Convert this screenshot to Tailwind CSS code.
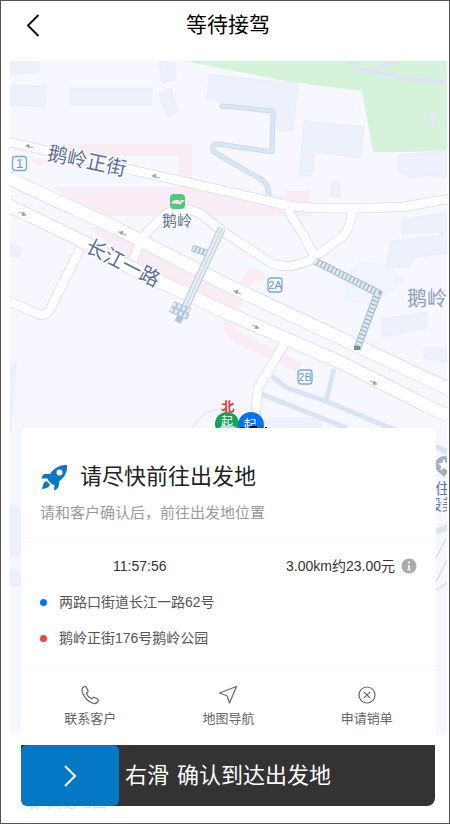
<!DOCTYPE html>
<html lang="zh-CN">
<head>
<meta charset="utf-8">
<meta name="viewport" content="width=device-width, initial-scale=1">
<title>等待接驾</title>
<script src="https://cdn.jsdelivr.net/npm/@tailwindcss/browser@4"></script>
</head>
<body class="min-h-screen bg-white font-['Liberation_Sans','Noto_Sans_CJK_SC',sans-serif] text-[#333]">
<div class="flex min-h-screen flex-col border border-[#555] pb-4">

  <header class="grid h-[60px] grid-cols-[64px_1fr_64px] items-center pb-3">
    <button type="button" aria-label="返回" class="flex h-10 items-center justify-center">
      <svg class="h-6 w-4" viewBox="0 0 16 24" fill="none" stroke="#111" stroke-width="2"><path d="M13.5 2 3 12.500 13.500 23"/></svg>
    </button>
    <h1 class="pl-1.5 text-center text-[21px] leading-8 text-black">等待接驾</h1>
  </header>

  <main class="flex flex-1 flex-col">
    <div class="ml-[9px] mr-[2px] grid">
      <svg class="col-start-1 row-start-1 h-[673px] w-full" viewBox="10 61 437 673" preserveAspectRatio="xMidYMin slice" role="img" aria-label="地图">
        <rect x="10" y="61" width="437" height="673" fill="#f7f7ff"/>
        <!-- park -->
        <path d="M185 61H447V150L410 152H373L362 91 290 82Z" fill="#d5f3da"/>
        <g fill="none" stroke="#dfe3f4" stroke-width="4"><path d="M350 61 355 67 370 71 410 79 447 83M370 71 397 60"/></g>
        <path d="M430 112h5v12l-3 3-2-3Z" fill="#e4e8f8"/>
        <!-- buildings -->
        <g fill="#edf1fc" stroke="#e6eaf5" stroke-width=".7">
          <path d="M10 61H39V72L10 75ZM10 85 46 86 45 107 10 105ZM70 88H152V105H70ZM159 62H174L176 80 162 83ZM159 94 171 88 178 111 168 118ZM209 74 298 84 293 131 278 131 275 110 226 104 207 99Z"/>
          <path d="M304 121 364 127 361 158 315 152 312 176 299 176ZM332 181H340V197H330ZM398 155 447 151V178L427 175 412 178 398 170ZM402 219 447 213V232L402 234Z"/>
          <path d="M391 241 436 236 447 230V253L413 258 409 268 386 267ZM382 319 427 312V328L382 337ZM424 348H447V363L424 358Z"/>
          <path d="M345 275 360 260 388 266 407 280 370 305 345 302Z" fill="#f0f4fd" stroke="none"/>
          <path d="M10 243 20 247 22 252 18 257 10 255ZM10 363H16L11 430H10ZM10 507H22V556H10ZM10 571H22V585H10ZM268 418H321V430H260Z"/>
        </g>
        <!-- station area -->
        <g fill="#f9ecf4">
          <path d="M50 144H192V183L225 191 285 196V191H310V216H90L53 187 178 187V156H95L75 150ZM28 157 50 160 38 166Z"/>
          <path d="M88 227H112L135 243 128 260ZM140 248 225 286 243 294 236 310 225 305 135 264Z"/>
        </g>
        <path d="M264 277 252 274 245 284 232 313Q224 330 240 339L300 368" fill="none" stroke="#f9ecf4" stroke-width="11"/>
        <!-- footpaths -->
        <g fill="none" stroke="#c9d6e8" stroke-width="5" stroke-linejoin="round" stroke-linecap="round">
          <path d="M222 106 273 111 272 152 218 144Q210 144 214 152L224 158 259 178Q269 183 269 196"/>
        </g>
        <g fill="none" stroke="#d9e6f6" stroke-width="3.500" stroke-linejoin="round" stroke-linecap="round">
          <path d="M222 106 273 111 272 152 218 144Q210 144 214 152L224 158 259 178Q269 183 269 196"/>
        </g>
        <g fill="none" stroke="#d9e3f4" stroke-width="5"><path d="M272 376 285 387 328 402 395 430M334 369 326 402M261 394 347 428"/></g>
        <!-- roads: casing, then surface -->
        <g fill="none" stroke="#d8dcea" stroke-linejoin="round">
          <path stroke-width="10" d="M80 249 52 305Q46 320 34 312L8 301M133 260 143 236 163 216Q185 202 205 217L225 233 268 261Q287 272 312 259L342 237Q352 226 352 209M287 209 304 236 315 257M286 341 258 388 254 430"/>
          <path stroke-width="10" d="M8 142 225 191 290 206Q320 210 402 207L449 199"/>
          <path stroke-width="14" d="M8 178 120 230 225 284 449 389M8 205 80 240 131 268 225 312 342 363 425 405 449 416"/>
        </g>
        <g fill="none" stroke="#fff" stroke-linejoin="round">
          <path stroke-width="8.500" d="M80 249 52 305Q46 320 34 312L8 301M133 260 143 236 163 216Q185 202 205 217L225 233 268 261Q287 272 312 259L342 237Q352 226 352 209M287 209 304 236 315 257M286 341 258 388 254 430"/>
          <path stroke-width="8.500" d="M8 142 225 191 290 206Q320 210 402 207L449 199"/>
          <path stroke-width="12.500" d="M8 178 120 230 225 284 449 389M8 205 80 240 131 268 225 312 342 363 425 405 449 416"/>
        </g>
        <!-- direction arrows -->
        <g stroke="#aaa" stroke-width="1" fill="#999">
          <path d="M26 146 33 147.500M26 145.500 29 144.500V148ZM152 176 160 178M152 175.500 156 174.500 155 178ZM119 232 126 235M119 232 123 231.500 122 235ZM19 212 26 215M26 215 22 215.500 23 212ZM234 291 241 294M234 291 238 290.500 237 294ZM252 325 259 328M259 328 255 328.500 256 325ZM370 381 377 384M377 384 373 384.500 374 381Z"/>
        </g>
        <!-- footbridge and stairs -->
        <path d="M222 228 185 308" stroke="#bccbd8" stroke-width="8"/>
        <path d="M222 228 185 308" stroke="#e4edf4" stroke-width="6"/>
        <path d="M222 228 185 308" stroke="#c6d4df" stroke-width="1"/>
        <g fill="none">
          <path d="M192 248 207 253" stroke="#b3c3d8" stroke-width="7"/><path d="M193 248 207 253" stroke="#e3ebf6" stroke-width="5" stroke-dasharray="2 2"/>
          <path d="M170 309 188 317M173 304 190 311M176 318 182 321" stroke="#b3c3d8" stroke-width="6"/><path d="M170 309 188 317M173 304 190 311" stroke="#e3ebf6" stroke-width="4" stroke-dasharray="3 2"/>
          <path d="M315 261 378 293 357 349" stroke="#a9bccb" stroke-width="7.500"/>
          <path d="M315 261 378 293 357 349" stroke="#e0ecf3" stroke-width="5.500" stroke-dasharray="2.500 1.500"/>
        </g>
        <path d="M354 346h6v4h-6Z" fill="#7d8c90"/>
        <!-- exits -->
        <g fill="#f6faff" stroke="#78a9e2" stroke-width="1.300">
          <rect x="12.500" y="156.500" width="14" height="14" rx="3"/><rect x="268" y="278" width="14" height="14" rx="3"/><rect x="298" y="370" width="14" height="14" rx="3"/>
        </g>
        <g fill="#6b95cf" font-size="11" text-anchor="middle"><text x="19.500" y="168" font-size="13">1</text><text x="275" y="289">2A</text><text x="305" y="381">2B</text></g>
        <!-- station -->
        <rect x="170" y="194" width="15" height="15" rx="4" fill="#50c97d"/>
        <path d="M171.500 203.500q1-3 4-3h3.500l-1 3h-2.500M178 204l3-3.500h3l-1 1h-1.500l-1 3" fill="#d9f6e3" stroke="#fff" stroke-width=".8"/>
        <g fill="#5c6f9d" stroke="#fff" stroke-width="2" paint-order="stroke" text-anchor="middle">
          <text x="177" y="226" font-size="15">鹅岭</text>
          <text x="87" y="168" font-size="20" transform="rotate(12 87 161)">鹅岭正街</text>
          <text x="123" y="270" font-size="20" transform="rotate(27 123 263)">长江一路</text>
        </g>
        <text x="407" y="306" font-size="20" fill="#8e9dc3">鹅岭</text>
        <!-- pickup point markers -->
        <path d="M192 429Q201 410 224 408" fill="none" stroke="#dce0ea"/>
        <circle cx="227" cy="424" r="12" fill="#17a354"/>
        <text x="227" y="426" font-size="12" fill="#fff" text-anchor="middle">起</text>
        <ellipse cx="228" cy="432" rx="11" ry="7" fill="#a8e3ee"/>
        <circle cx="251" cy="425" r="13" fill="#0b6ff0"/>
        <text x="250" y="429" font-size="13" fill="#fff" text-anchor="middle">起</text>
        <path d="M240 427h5v3h-5ZM250 426h7v4h-7ZM261 427h2v3h-2ZM265 427h2v2h-2Z" fill="#111"/>
        <text x="228" y="411" font-size="13" font-weight="bold" fill="#e8323c" text-anchor="middle">北</text>
        <!-- east edge -->
        <g fill="none" stroke="#dce4f3" stroke-width="6"><path d="M432 445 449 453M432 533 449 527"/></g>
        <g fill="none" stroke="#dcdfeb" stroke-width="1.500"><path d="M435 560 446 539M436 582 447 560M435 590Q443 588 449 580"/></g>
        <circle cx="444" cy="465" r="9" fill="#a6afc2"/><path d="M439 472h9l-4 5Z" fill="#a6afc2"/>
        <path d="m444 459 1.800 4 4.200.4-3.200 2.800 1 4.200-3.800-2.300-3.800 2.300 1-4.200-3.200-2.800 4.200-.4Z" fill="#fff"/>
        <g fill="#6676a5" font-size="15"><text x="435" y="494">住</text><text x="427" y="510">段美</text></g>
      </svg>

      <section class="relative col-start-1 row-start-1 mx-[11px] mt-[367px] rounded-lg bg-white">
        <div class="border-b border-[#f8f8f8] px-[19px] pb-4 pt-[33px]">
          <div class="flex items-center gap-3">
            <svg class="h-8 w-7 shrink-0" viewBox="0 0 28 32">
              <path d="M27 4C20 3.500 14 7 10 13L5 12.800C3.500 13 2 15 1.500 17.500L7.500 17.500 8.500 20 12.500 23.500 14.500 24 14 29.500C17 28.500 19 26.500 19 23.500L19 20.500C25 16 27.500 11 27 4Z" fill="#0b77c6"/>
              <circle cx="19.500" cy="11.500" r="3" fill="#fff"/>
              <path d="M6.500 20C3.500 21 3 24 2 28 6 27.500 9 26.500 10 23.500Z" fill="#0b77c6"/>
            </svg>
            <h2 class="text-[22px] leading-8 text-[#222]">请尽快前往出发地</h2>
          </div>
          <p class="mt-2 text-[15px] leading-6 text-[#999]">请和客户确认后，前往出发地位置</p>
        </div>

        <div class="border-b border-[#f8f8f8] px-[19px] pb-4 pt-3">
          <div class="flex items-center justify-between">
            <time class="pl-[73px] text-[14px] leading-6">11:57:56</time>
            <div class="flex items-center gap-1.5">
              <span class="text-[14px] leading-6">3.00km约23.00元</span>
              <button type="button" aria-label="费用说明" class="flex size-4 items-center justify-center">
                <svg class="size-4" viewBox="0 0 16 16"><circle cx="8" cy="8" r="7.500" fill="#aaa"/><path d="M7 3.500h2v2H7ZM6.500 7H9v4.500h1v1H6v-1h1V8h-.5Z" fill="#eee"/></svg>
              </button>
            </div>
          </div>
          <ul class="mt-3 flex flex-col gap-3 text-[14px] leading-6 text-[#555]">
            <li class="flex items-center gap-3"><span class="size-[7px] rounded-full bg-[#0b6ff0]"></span>两路口街道长江一路62号</li>
            <li class="flex items-center gap-3"><span class="size-[7px] rounded-full bg-[#f04444]"></span>鹅岭正街176号鹅岭公园</li>
          </ul>
        </div>

        <nav class="grid grid-cols-3 pb-2 pt-[18px] text-[13px] leading-5 text-[#666]">
          <button type="button" class="flex flex-col items-center gap-1">
            <svg class="size-5" viewBox="0 0 20 20" fill="none" stroke="#666" stroke-width="1.200" stroke-linejoin="round"><path d="M4.500 1.500C2 2.500 1.500 4.500 2.300 7 4 12 8 16.500 13 18.200 15.500 19 17.500 18 18.300 15.800 18.500 15 18.300 14.500 17.500 14L14.500 12.500C13.700 12.200 13 12.300 12.500 13L11.700 14C9.500 13 7.200 10.500 6.300 8.300L7.300 7.500C8 7 8.200 6.300 7.900 5.500L6.300 2.200C6 1.500 5.300 1.200 4.500 1.500Z"/></svg>
            联系客户
          </button>
          <button type="button" class="flex flex-col items-center gap-1">
            <svg class="size-5" viewBox="0 0 20 20" fill="none" stroke="#666" stroke-width="1.200" stroke-linejoin="round"><path d="M18.500 1.500 1.500 8 9 10.700 11.500 18Z"/></svg>
            地图导航
          </button>
          <button type="button" class="flex flex-col items-center gap-1">
            <svg class="size-5" viewBox="0 0 20 20" fill="none" stroke="#666" stroke-width="1.200"><circle cx="10" cy="10" r="8"/><path d="m6.800 6.800 6.400 6.400M13.200 6.800l-6.400 6.400"/></svg>
            申请销单
          </button>
        </nav>
      </section>
    </div>

    <div class="relative ml-[20px] mr-[14px] mt-2">
      <!-- map credit tucked under the slider -->
      <div class="absolute -bottom-1.5 left-1.5 flex items-end gap-1 text-[15px] leading-5 text-[#dcdce0]" aria-hidden="true">
        <svg class="h-4 w-4" viewBox="0 0 16 16" fill="#cfeafc"><path d="M1 8 15 6 10 15 8 11 4 14Z"/></svg>高德地图
      </div>
      <div class="relative flex h-[61px] rounded-b-lg bg-[#333]">
        <button type="button" aria-label="滑动确认" class="flex w-[98px] items-center justify-center rounded-md bg-[#0478c5]">
          <svg class="h-6 w-4" viewBox="0 0 16 24" fill="none" stroke="#fff" stroke-width="2"><path d="M3 2 13 12 3 22"/></svg>
        </button>
        <div class="flex items-center gap-2 pl-[6px] text-[22px] leading-8 text-white"><span>右滑</span><span>确认到达出发地</span></div>
      </div>
    </div>
  </main>
</div>
</body>
</html>
